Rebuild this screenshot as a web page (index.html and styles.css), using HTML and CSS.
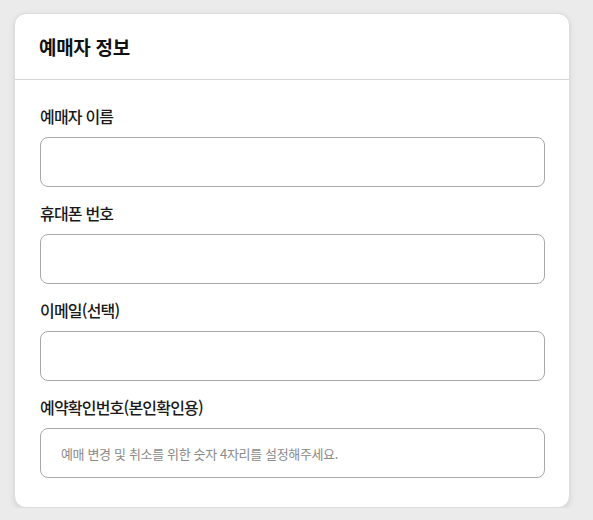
FILE: index.html
```html
<!DOCTYPE html>
<html lang="ko">
<head>
<meta charset="utf-8">
<link rel="stylesheet" href="styles.css">
</head>
<body>
<section class="card">
  <header class="card-head">
    <h2 class="card-title">예매자 정보</h2>
  </header>
  <div class="card-body">
    <div class="field">
      <label class="field-label">예매자 이름</label>
      <input class="field-input" type="text">
    </div>
    <div class="field">
      <label class="field-label">휴대폰 번호</label>
      <input class="field-input" type="text">
    </div>
    <div class="field">
      <label class="field-label">이메일(선택)</label>
      <input class="field-input" type="text">
    </div>
    <div class="field">
      <label class="field-label">예약확인번호(본인확인용)</label>
      <input class="field-input" type="text" placeholder="예매 변경 및 취소를 위한 숫자 4자리를 설정해주세요.">
    </div>
  </div>
</section>
</body>
</html>
```
FILE: styles.css
```css
html, body {
  margin: 0;
  padding: 0;
  background: #ebebeb;
  font-family: "Noto Sans CJK KR", "Noto Sans", sans-serif;
  color: #111;
}
body {
  padding: 13px 0 0 14px;
}
.card {
  box-sizing: border-box;
  width: 556px;
  height: 495px;
  background: #fff;
  border: 1px solid #dcdcdc;
  border-radius: 12px;
  box-shadow: 0 2px 6px rgba(0, 0, 0, 0.10);
}
.card-head {
  height: 65px;
  border-bottom: 1px solid #d4d4d4;
  display: flex;
  align-items: center;
  padding-left: 24px;
}
.card-title {
  margin: 0;
  font-size: 19px;
  font-weight: 700;
  line-height: 24px;
  color: #111;
  letter-spacing: -0.3px;
}
.card-body {
  padding: 24px 24px 0 25px;
  display: flex;
  flex-direction: column;
  gap: 14px;
}
.field {
  display: flex;
  flex-direction: column;
}
.field-label {
  font-size: 16px;
  font-weight: 500;
  line-height: 24px;
  color: #1a1a1a;
  margin-bottom: 9px;
  letter-spacing: -0.8px;
}
.field-input {
  box-sizing: border-box;
  height: 50px;
  width: 100%;
  border: 1px solid #a9a9a9;
  border-radius: 8px;
  padding: 0 20px;
  font-family: inherit;
  font-size: 13px;
  letter-spacing: -0.35px;
  color: #333;
  background: #fff;
  outline: none;
}
.field-input::placeholder {
  color: #8a8a8a;
}
```
